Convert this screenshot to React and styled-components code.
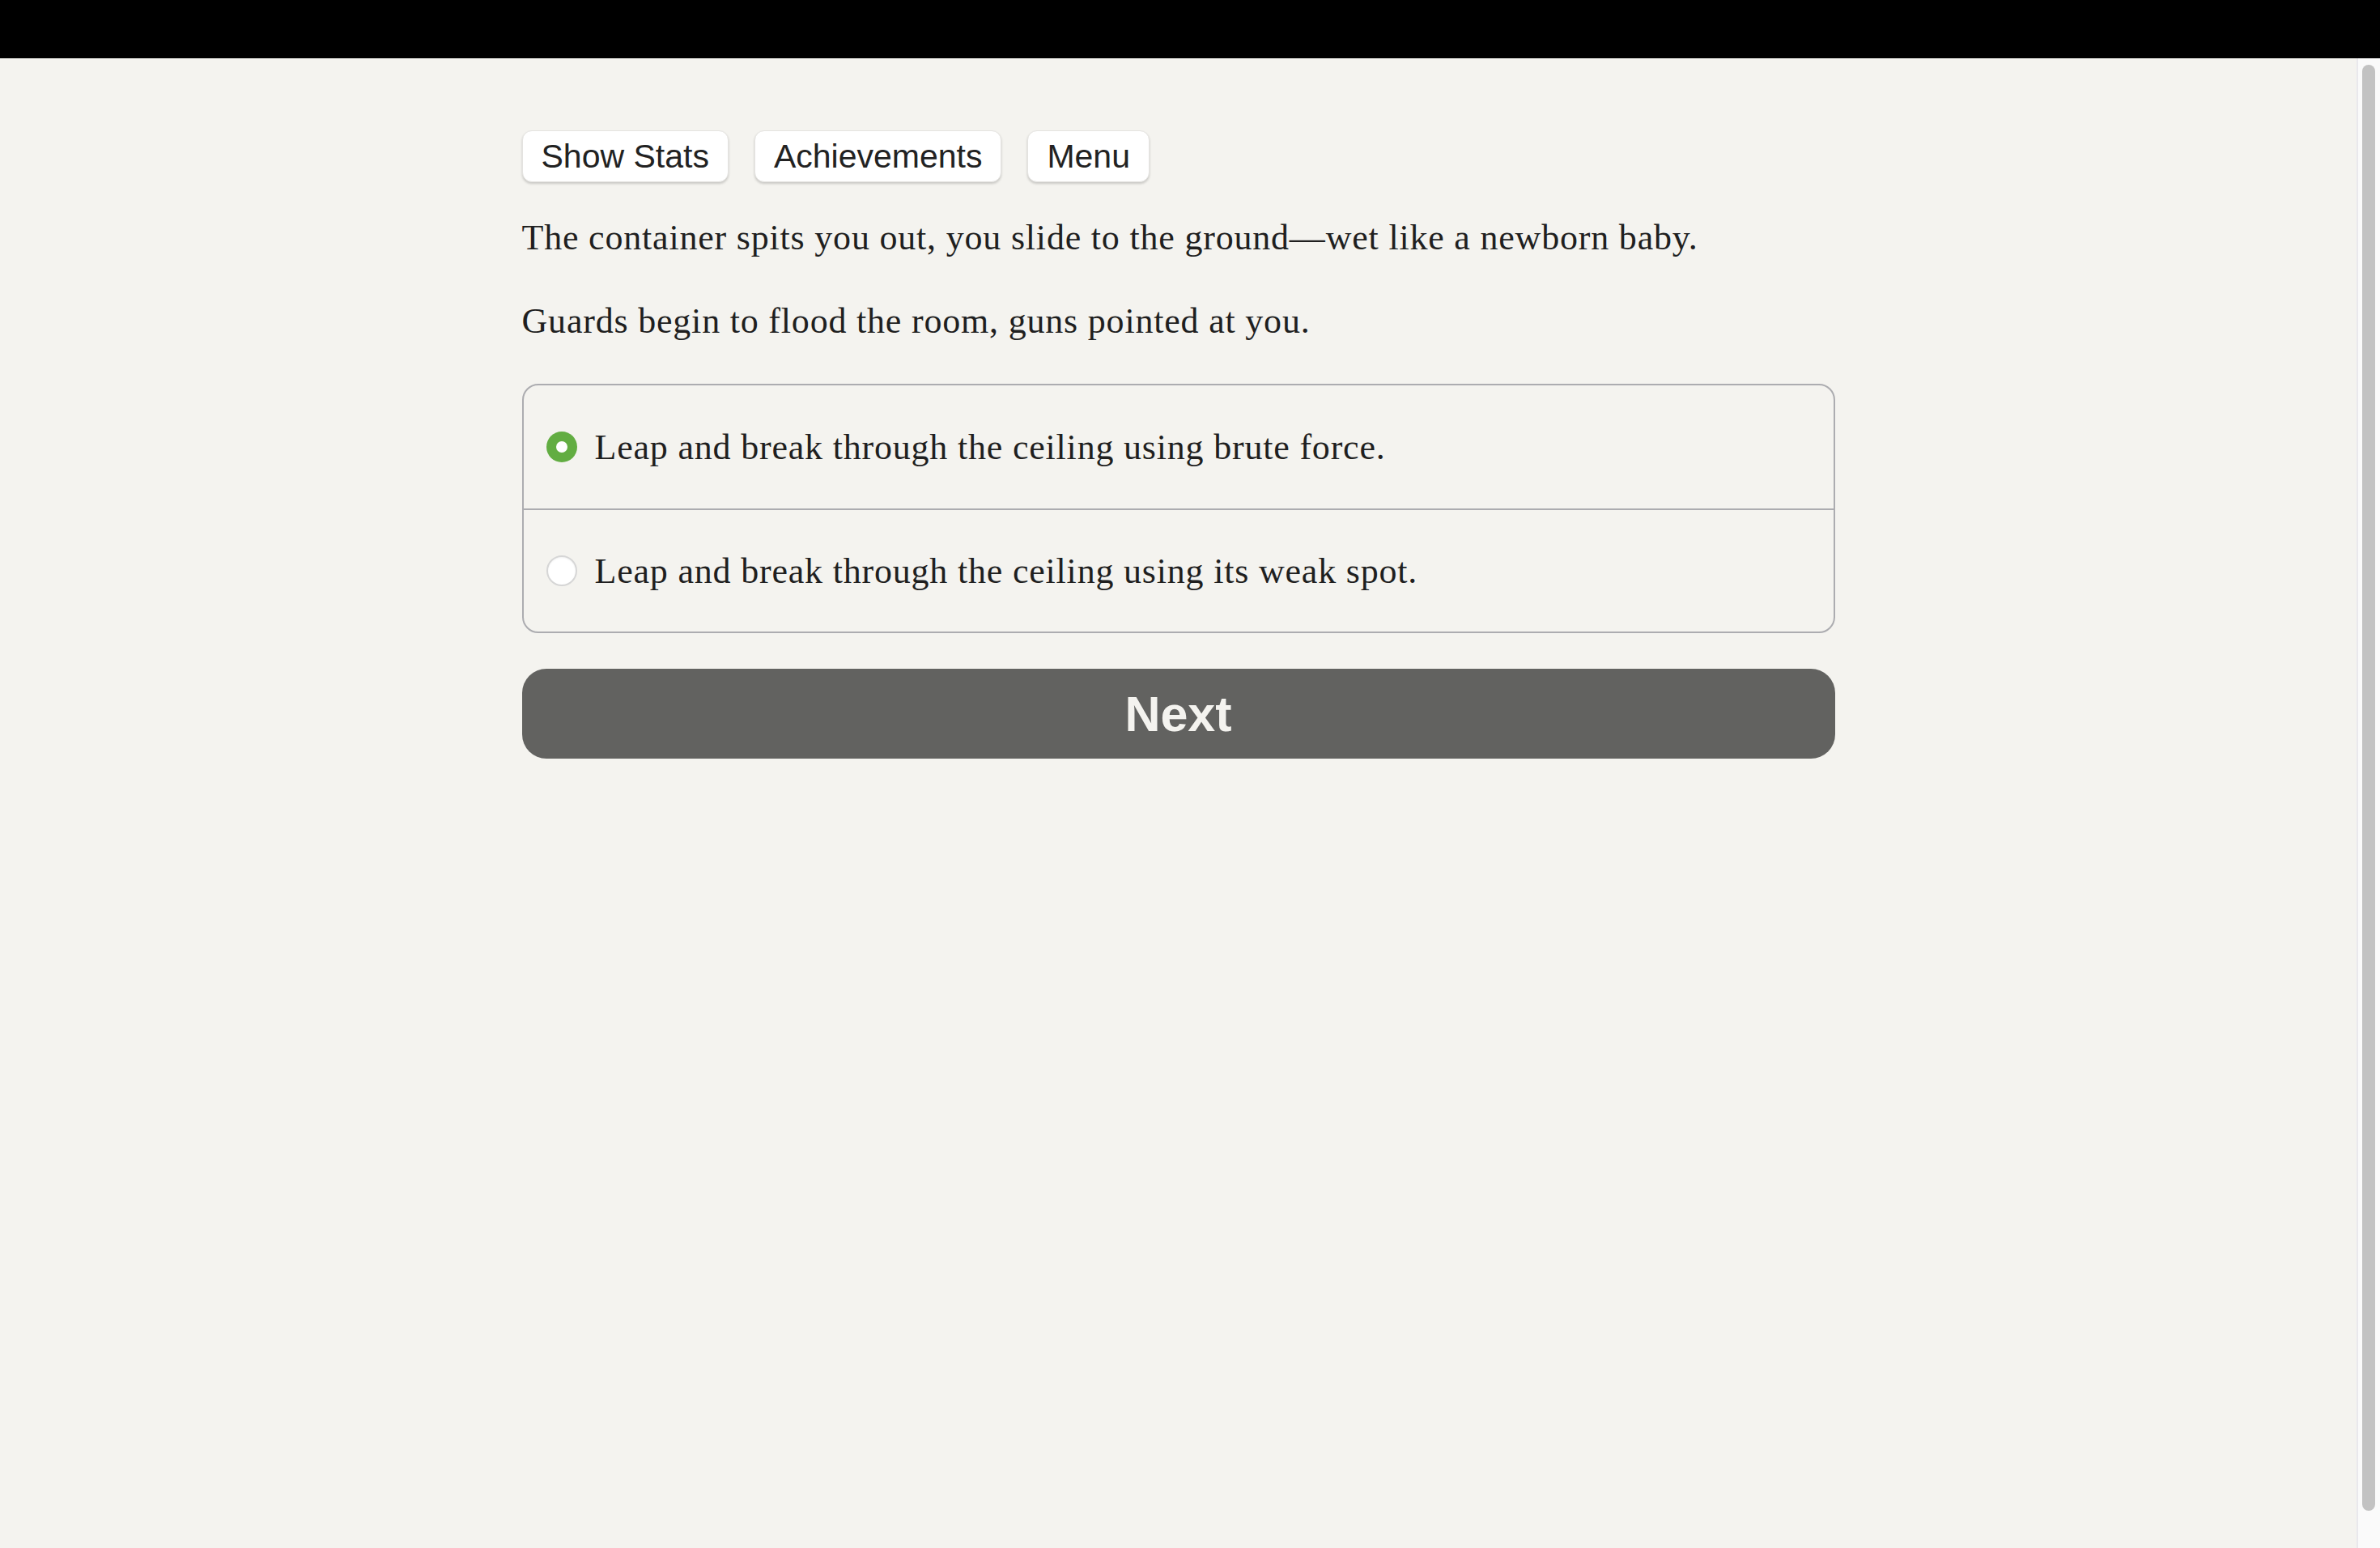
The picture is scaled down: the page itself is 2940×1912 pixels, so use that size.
import React, { useState } from 'react';
import styled, { createGlobalStyle } from 'styled-components';

const GlobalStyle = createGlobalStyle`
  html, body {
    margin: 0;
    padding: 0;
    height: 100%;
    background: #f4f3ef;
    overflow: hidden;
  }
  #root {
    height: 100%;
  }
`;

const Frame = styled.div`
  display: flex;
  flex-direction: column;
  height: 100vh;
`;

const TopBar = styled.div`
  height: 72px;
  background: #000;
  flex-shrink: 0;
`;

const Body = styled.div`
  flex: 1;
  display: flex;
  min-height: 0;
`;

const Main = styled.main`
  flex: 1;
  display: flex;
  justify-content: center;
  padding-top: 89px;
`;

const Column = styled.div`
  width: 1622px;
  display: flex;
  flex-direction: column;
`;

const Toolbar = styled.div`
  display: flex;
  gap: 32px;
  margin-bottom: 37px;
`;

const ToolButton = styled.button`
  height: 64px;
  padding: 0 23px;
  border: 1px solid #e4e3e0;
  border-radius: 12px;
  background: #fff;
  box-shadow: 0 2px 3px rgba(0, 0, 0, 0.18);
  font-family: 'Liberation Sans', Arial, sans-serif;
  font-size: 41px;
  color: #222;
  cursor: pointer;
`;

const Paragraph = styled.p`
  margin: 0 0 40px;
  font-family: 'Liberation Serif', 'Times New Roman', serif;
  font-size: 44px;
  line-height: 63px;
  letter-spacing: 0.8px;
  color: #1f1f1f;
`;

const ChoiceList = styled.fieldset`
  margin: 6px 0 0;
  padding: 0;
  border: 2px solid #acacb0;
  border-radius: 20px;
  overflow: hidden;
`;

const ChoiceRow = styled.label`
  display: flex;
  align-items: center;
  gap: 22px;
  height: ${(p) => (p.$first ? '152px' : '152px')};
  padding: 0 28px;
  box-sizing: border-box;
  border-top: ${(p) => (p.$first ? 'none' : '2px solid #acacb0')};
  font-family: 'Liberation Serif', 'Times New Roman', serif;
  font-size: 44px;
  letter-spacing: 0.8px;
  color: #1f1f1f;
  cursor: pointer;
`;

const Radio = styled.span`
  width: 38px;
  height: 38px;
  border-radius: 50%;
  box-sizing: border-box;
  flex-shrink: 0;
  display: flex;
  align-items: center;
  justify-content: center;
  background: ${(p) => (p.$checked ? '#62ad42' : '#fff')};
  border: ${(p) => (p.$checked ? 'none' : '2px solid #d6d6d6')};
  box-shadow: ${(p) => (p.$checked ? 'none' : 'inset 0 1px 2px rgba(0,0,0,0.06)')};

  &::after {
    content: '';
    width: 14px;
    height: 14px;
    border-radius: 50%;
    background: #fff;
    display: ${(p) => (p.$checked ? 'block' : 'none')};
  }
`;

const NextButton = styled.button`
  margin-top: 44px;
  height: 111px;
  border: none;
  border-radius: 30px;
  background: #626260;
  color: #f4f3ef;
  font-family: 'Liberation Sans', Arial, sans-serif;
  font-weight: 700;
  font-size: 61px;
  cursor: pointer;
`;

const ScrollRail = styled.div`
  width: 29px;
  flex-shrink: 0;
  background: #fafafa;
  border-left: 2px solid #e9e8ec;
  box-sizing: border-box;
  padding: 8px 6px 46px 5px;
  display: flex;
`;

const ScrollThumb = styled.div`
  flex: 1;
  background: #c2c2c2;
  border-radius: 8px;
`;

const choices = [
  'Leap and break through the ceiling using brute force.',
  'Leap and break through the ceiling using its weak spot.',
];

export default function App() {
  const [picked, setPicked] = useState(0);

  return (
    <>
      <GlobalStyle />
      <Frame>
        <TopBar />
        <Body>
          <Main>
            <Column>
              <Toolbar>
                <ToolButton>Show Stats</ToolButton>
                <ToolButton>Achievements</ToolButton>
                <ToolButton>Menu</ToolButton>
              </Toolbar>
              <Paragraph>
                The container spits you out, you slide to the ground—wet like a newborn baby.
              </Paragraph>
              <Paragraph>Guards begin to flood the room, guns pointed at you.</Paragraph>
              <ChoiceList>
                {choices.map((text, i) => (
                  <ChoiceRow key={text} $first={i === 0} onClick={() => setPicked(i)}>
                    <Radio $checked={picked === i} />
                    {text}
                  </ChoiceRow>
                ))}
              </ChoiceList>
              <NextButton>Next</NextButton>
            </Column>
          </Main>
          <ScrollRail>
            <ScrollThumb />
          </ScrollRail>
        </Body>
      </Frame>
    </>
  );
}
